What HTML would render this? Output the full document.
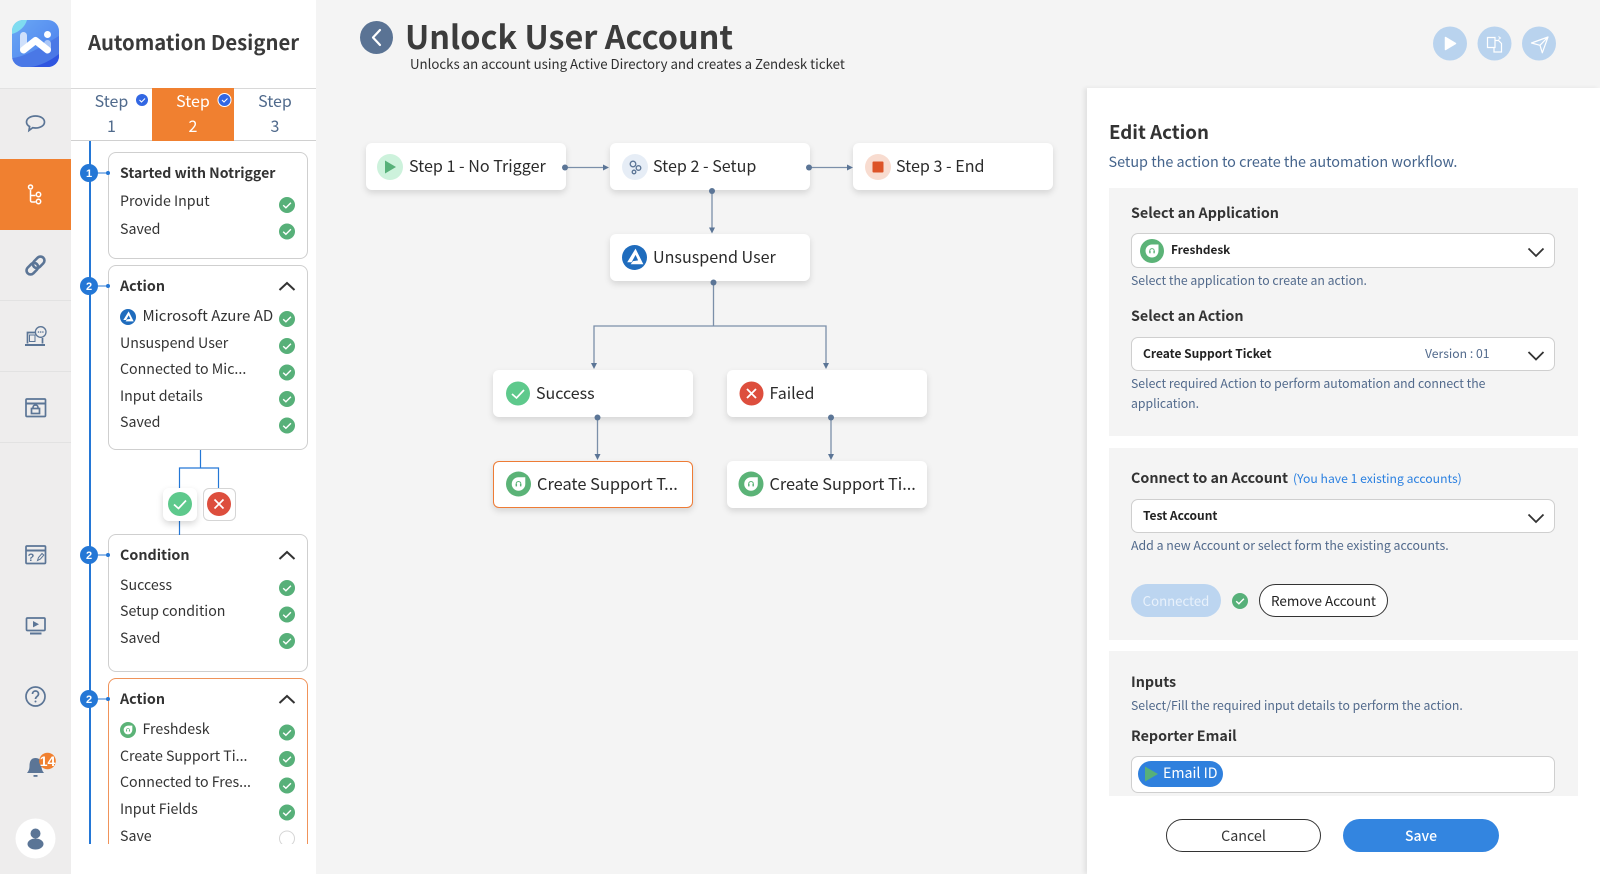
<!DOCTYPE html>
<html><head><meta charset="utf-8"><style>
html,body{margin:0;padding:0}
body{width:1600px;height:874px;overflow:hidden;background:#f4f4f4;position:relative;font-family:"Noto Sans CJK JP","Liberation Sans",sans-serif;color:#2f2f2f}
.a{position:absolute}
.t{position:absolute;white-space:nowrap;line-height:20px;height:20px}
.b{font-weight:700}
.s{font-size:14.200px;color:#333}
.h{font-size:14.300px;font-weight:700;color:#333}
.hint{font-size:12.250px;color:#526a8c}
.lbl{font-size:14.300px;font-weight:700;color:#333}
.sec{position:absolute;left:1109px;width:469px;background:#f4f4f4}
.inp{position:absolute;left:1131px;width:424px;box-sizing:border-box;background:#fff;border:1px solid #cfcfcf;border-radius:7px}
.node{position:absolute;width:200px;height:47px;background:#fff;border-radius:6px;box-shadow:0 3px 7px rgba(0,0,0,.13)}
.node span{position:absolute;left:43px;top:10.500px;line-height:22px;font-size:16.100px;white-space:nowrap;color:#2b2b2b}
.card{position:absolute;left:108px;width:200px;box-sizing:border-box;background:#fff;border:1px solid #cfcfcf;border-radius:8px}
.line{position:absolute;background:#e2e2e2;left:0;width:71px;height:1px}
svg{position:absolute;left:0;top:0;overflow:visible}
</style></head><body>
<svg width="0" height="0"><defs>
<symbol id="ck" viewBox="0 0 16 16" overflow="visible"><circle cx="8" cy="8" r="8" fill="#57b079"/><path d="M4.2 8.2l2.7 2.6 5-5" fill="none" stroke="#fff" stroke-width="1.4"/></symbol>
<symbol id="fd" viewBox="0 0 24 24"><circle cx="12" cy="12" r="12" fill="#5bb377"/><path d="M12 5.500h6.500v6.500a6.500 6.500 0 1 1-6.500-6.500z" fill="#fff"/><path d="M9.800 13v-1.200a2.200 2.200 0 0 1 4.400 0v1.200" fill="none" stroke="#5bb377" stroke-width="1"/><rect x="9.200" y="12" width="1.400" height="2.300" fill="#5bb377"/><rect x="13.400" y="12" width="1.400" height="2.300" fill="#5bb377"/></symbol>
<symbol id="az" viewBox="0 0 24 24"><circle cx="12" cy="12" r="12" fill="#1f6cbd"/><path d="M13 3.500L5 16.500h4.200L13 9.500l2.500 5.300-5 .7L8.300 18.500H20.500z" fill="#fff"/></symbol>
</defs></svg>

<!-- rail -->
<div class="a" style="left:0;top:0;width:71px;height:874px;background:#eeeded"></div>
<div class="a" style="left:0;top:0;width:71px;height:88px;background:#f3f3f3"></div>
<div class="a" style="left:0;top:159px;width:71px;height:71px;background:#f08030"></div>
<div class="line" style="top:88px"></div><div class="line" style="top:300px"></div><div class="line" style="top:371px"></div><div class="line" style="top:442px"></div>
<svg width="71" height="874">
<defs><linearGradient id="lg" x1="0" y1="0" x2="1" y2="1"><stop offset="0" stop-color="#6aa8f5"/><stop offset="1" stop-color="#4a7cec"/></linearGradient>
<clipPath id="lc"><rect x="12" y="20" width="47" height="47" rx="11"/></clipPath></defs>
<g clip-path="url(#lc)"><rect x="12" y="20" width="47" height="47" fill="url(#lg)"/>
<path d="M12 20h15c-2 7-8 12-15 14z" fill="#7fdcf0"/>
<path d="M12 67V58c12-1 24-8 47-22v31z" fill="#4a78e6"/><path d="M30 67c10-1 20-6 29-13v13z" fill="#2f55e0"/></g>
<rect x="20" y="32" width="7" height="20" rx="3.500" fill="#cfe0fb"/><rect x="44" y="40" width="7" height="12" rx="3.500" fill="#a9c6f8"/>
<path d="M23.500 50L35.500 40.500 47.500 50" fill="none" stroke="#fff" stroke-width="7" stroke-linecap="round" stroke-linejoin="round"/><circle cx="47.500" cy="34.500" r="3.500" fill="#fff"/>
<g fill="none" stroke="#5b7596" stroke-width="1.700">
<path d="M35.500 116c5 0 9 2.500 9 6s-4 6-9 6c-1 0-2 0-2.800-.3l-3.700 2.800.6-4c-2-1-3.100-2.700-3.100-4.500 0-3.500 4-6 9-6z"/>
<path d="M25 345h20" stroke-width="2"/><path d="M27.500 343.500V332.500h7.500M42.500 338v5.500"/><rect x="29.500" y="335" width="5.500" height="6.500" stroke-width="1"/><circle cx="40.700" cy="332" r="5.300" stroke-width="1.300"/>
<rect x="26" y="399" width="19.500" height="17.500" rx="1"/><path d="M26 403.500h19.500" stroke-width="2"/><rect x="31.500" y="408.500" width="8" height="5"/><path d="M33 408.500v-1a2.500 2.500 0 0 1 5 0v1"/>
<rect x="26" y="546" width="19.500" height="17.500" rx="1"/><path d="M26 550.500h19.500" stroke-width="2"/>
<rect x="26.500" y="618" width="18.500" height="12.500" rx="1"/><path d="M30 633.500h11.500" stroke-width="2"/>
<circle cx="35.500" cy="696.500" r="9.500"/><path d="M32.500 694c0-4 6-4 6 0 0 2.500-3 2.500-3 5"/>
<path d="M37.500 560.500l1-3 3.500-4 1.800 1.600-3.500 4z" stroke-width="1"/>
</g>
<circle cx="35.500" cy="701.500" r="1" fill="#5b7596"/>
<g fill="#5b7596"><circle cx="38.500" cy="332" r=".8"/><circle cx="40.700" cy="332" r=".8"/><circle cx="42.900" cy="332" r=".8"/></g>
<text x="31" y="561" font-size="11" font-weight="700" fill="#5b7596" text-anchor="middle" font-family="Liberation Sans,sans-serif">?</text>
<g fill="none" stroke="#5b7596" stroke-width="2.600" transform="rotate(-45 35.500 265.500)"><rect x="24.500" y="261.500" width="13" height="8" rx="4"/><rect x="33.500" y="261.500" width="13" height="8" rx="4"/></g>
<g fill="none" stroke="#fff" stroke-width="1.500"><path d="M30.500 190v10.500a1.500 1.500 0 0 0 1.500 1.500h3.500M31 195.500h4.500"/><circle cx="30.500" cy="187" r="2"/><circle cx="38.500" cy="194.500" r="2.200"/><circle cx="38.500" cy="201.500" r="2.200"/></g>
<path d="M33 621l6 3.200-6 3.200z" fill="#5b7596"/>
<path d="M35.500 758c4.500 0 6 3.500 6 8 0 3 .8 5 2.500 7h-17c1.700-2 2.500-4 2.500-7 0-4.500 1.500-8 6-8z" fill="#5b7596"/><rect x="33.500" y="775" width="4" height="1.800" fill="#5b7596"/>
<circle cx="47.500" cy="761" r="8.300" fill="#f08030"/>
<circle cx="35.500" cy="838.500" r="20" fill="#fff"/><circle cx="35.500" cy="833.500" r="5" fill="#5b7596"/><ellipse cx="35.500" cy="844" rx="8" ry="5.500" fill="#5b7596"/>
</svg>
<div class="t b" style="left:38.500px;top:751px;font-size:14px;color:#fff;width:18px;text-align:center;font-family:'Liberation Sans',sans-serif">14</div>

<!-- panel -->
<div class="a" style="left:71px;top:0;width:245px;height:874px;background:#fff"></div>
<div class="t b" style="left:88px;top:31px;font-size:20.300px;line-height:20px;color:#3a3a3a">Automation Designer</div>
<div class="a" style="left:71px;top:88px;width:245px;height:1px;background:#d8d8d8"></div>
<div class="a" style="left:71px;top:140px;width:245px;height:1px;background:#d0d0d0"></div>
<div class="a" style="left:152px;top:88px;width:82px;height:53px;background:#f08030"></div>
<div class="t" style="left:71px;width:81px;text-align:center;top:90px;font-size:16px;color:#506a8c">Step</div>
<div class="t" style="left:71px;width:81px;text-align:center;top:115px;font-size:16px;color:#506a8c">1</div>
<div class="t" style="left:152px;width:82px;text-align:center;top:90px;font-size:16px;color:#fff">Step</div>
<div class="t" style="left:152px;width:82px;text-align:center;top:115px;font-size:16px;color:#fff">2</div>
<div class="t" style="left:234px;width:82px;text-align:center;top:90px;font-size:16px;color:#506a8c">Step</div>
<div class="t" style="left:234px;width:82px;text-align:center;top:115px;font-size:16px;color:#506a8c">3</div>
<svg width="320" height="160"><circle cx="142" cy="100" r="6" fill="#3267e3"/><circle cx="224.500" cy="100" r="6.500" fill="#3267e3" stroke="#fff" stroke-width="1"/><path d="M139.500 100l2 2 3.500-3.500M222 100l2 2 3.500-3.500" fill="none" stroke="#fff" stroke-width="1"/></svg>

<div class="a" style="left:71px;top:141px;width:240px;height:703px;overflow:hidden" id="clip">
<div style="position:absolute;left:-71px;top:-141px;width:320px;height:874px">
<div class="a" style="left:89px;top:141px;width:1.500px;height:703px;background:#2477d6"></div>
<div class="card" style="top:152px;height:107px"></div>
<div class="card" style="top:265px;height:185px"></div>
<div class="card" style="top:534px;height:138px"></div>
<div class="card" style="top:678px;height:220px;border-color:#f0935a"></div>

<div class="t h" style="left:120px;top:163px;font-size:14.100px">Started with Notrigger</div>
<div class="t s" style="left:120px;top:191px">Provide Input</div>
<div class="t s" style="left:120px;top:218.500px">Saved</div>
<div class="t h" style="left:120px;top:276px">Action</div>
<div class="t" style="left:142.500px;top:306px;font-size:15px;color:#333">Microsoft Azure AD</div>
<div class="t s" style="left:120px;top:332.500px">Unsuspend User</div>
<div class="t s" style="left:120px;top:359px">Connected to Mic...</div>
<div class="t s" style="left:120px;top:385.500px">Input details</div>
<div class="t s" style="left:120px;top:412px">Saved</div>
<div class="t h" style="left:120px;top:544.500px">Condition</div>
<div class="t s" style="left:120px;top:574.500px">Success</div>
<div class="t s" style="left:120px;top:601px">Setup condition</div>
<div class="t s" style="left:120px;top:628px">Saved</div>
<div class="t h" style="left:120px;top:689px">Action</div>
<div class="t" style="left:142.500px;top:719px;font-size:14.200px;color:#333">Freshdesk</div>
<div class="t s" style="left:120px;top:745.500px">Create Support Ti...</div>
<div class="t s" style="left:120px;top:772px">Connected to Fres...</div>
<div class="t s" style="left:120px;top:799px">Input Fields</div>
<div class="t s" style="left:120px;top:825.500px">Save</div>

<svg width="320" height="874">
<g fill="#2477d6">
<circle cx="89" cy="173" r="9"/><circle cx="89" cy="286" r="9"/><circle cx="89" cy="555" r="9"/><circle cx="89" cy="699" r="9"/>
<circle cx="108" cy="173" r="2"/><circle cx="108" cy="286" r="2"/><circle cx="108" cy="555" r="2"/><circle cx="108" cy="699" r="2"/>
<rect x="97" y="172.500" width="10" height="1"/><rect x="97" y="285.500" width="10" height="1"/><rect x="97" y="554.500" width="10" height="1"/><rect x="97" y="698.500" width="10" height="1"/>
</g>
<g font-size="11" font-weight="700" fill="#fff" text-anchor="middle" font-family="Liberation Sans, sans-serif"><text x="89" y="177">1</text><text x="89" y="290">2</text><text x="89" y="559">2</text><text x="89" y="703">2</text></g>
<g fill="none" stroke="#333" stroke-width="2"><path d="M279.500 290l7.500-7 7.500 7M279.500 559l7.500-7 7.500 7M279.500 703l7.500-7 7.500 7"/></g>
<use href="#ck" x="279" y="197" width="16" height="16"/><use href="#ck" x="279" y="223.500" width="16" height="16"/>
<use href="#ck" x="279" y="311" width="16" height="16"/><use href="#ck" x="279" y="338" width="16" height="16"/><use href="#ck" x="279" y="364.500" width="16" height="16"/><use href="#ck" x="279" y="391" width="16" height="16"/><use href="#ck" x="279" y="417.500" width="16" height="16"/>
<use href="#ck" x="279" y="580" width="16" height="16"/><use href="#ck" x="279" y="606.500" width="16" height="16"/><use href="#ck" x="279" y="633" width="16" height="16"/>
<use href="#ck" x="279" y="724.500" width="16" height="16"/><use href="#ck" x="279" y="751" width="16" height="16"/><use href="#ck" x="279" y="777.500" width="16" height="16"/><use href="#ck" x="279" y="804.500" width="16" height="16"/>
<circle cx="287" cy="838.500" r="7.500" fill="#fff" stroke="#d5d5d5"/>
<use href="#az" x="120" y="309" width="16" height="16"/><use href="#fd" x="120" y="722" width="16" height="16"/>
<path d="M200.500 450v18M179.500 488v-20h39v20M179.500 521v14" fill="none" stroke="#2477d6" stroke-width="1.200"/>
</svg>
<div class="a" style="left:163px;top:488px;width:34px;height:33px;background:#fff;border-radius:6px;box-shadow:0 3px 7px rgba(0,0,0,.16)"></div>
<div class="a" style="left:203px;top:488px;width:33px;height:33px;box-sizing:border-box;background:#fff;border:1px solid #d5d5d5;border-radius:6px"></div>
<svg width="320" height="874"><circle cx="180" cy="504" r="12" fill="#5ec98c"/><path d="M174 504.500l4.500 4 7.500-8" fill="none" stroke="#fff" stroke-width="1.700"/><circle cx="219" cy="504" r="12" fill="#dd4e3d"/><path d="M214.500 499.500l9 9m0-9l-9 9" stroke="#fff" stroke-width="1.700"/></svg>
</div></div>

<!-- header -->
<svg width="1600" height="874">
<circle cx="376.500" cy="37.500" r="16.500" fill="#5a7394"/><path d="M380 30l-7 7.500 7 7.500" fill="none" stroke="#fff" stroke-width="2.200" stroke-linecap="round" stroke-linejoin="round"/>
<circle cx="1450" cy="43.500" r="17" fill="#b9d3ee"/><circle cx="1494.500" cy="43.500" r="17" fill="#b9d3ee"/><circle cx="1539" cy="43.500" r="17" fill="#b9d3ee"/>
<path d="M1445.500 37.500l10 6-10 6z" fill="#fff" stroke="#fff" stroke-width="1.500" stroke-linejoin="round"/>
<g fill="none" stroke="#fff" stroke-width="1.200"><path d="M1487.500 37.500h7.500v10h-7.500z" /><path d="M1495 40.500h3.500l3 3v8.500h-7.500v-4.500"/><path d="M1498.500 36.500l2 1.500-2 1.500" stroke-width="1"/></g>
<path d="M1548 37l-16.500 6 8.500 2.300 2.300 7.500zM1548 37l-8 8.300" fill="none" stroke="#fff" stroke-width="1.200" stroke-linejoin="round"/>
</svg>
<div class="t" style="left:405px;top:26px;font-size:32.400px;font-weight:700;color:#3c3c3c">Unlock User Account</div>
<div class="t" style="left:410px;top:54px;font-size:13.250px;color:#2f2f2f">Unlocks an account using Active Directory and creates a Zendesk ticket</div>

<!-- flow -->
<div class="node" style="left:366px;top:143px"><span>Step 1 - No Trigger</span></div>
<div class="node" style="left:610px;top:143px"><span>Step 2 - Setup</span></div>
<div class="node" style="left:853px;top:143px"><span>Step 3 - End</span></div>
<div class="node" style="left:610px;top:234px"><span>Unsuspend User</span></div>
<div class="node" style="left:493px;top:370px"><span style="top:11px;font-size:16px">Success</span></div>
<div class="node" style="left:727px;top:370px"><span style="left:42.500px;top:11px;font-size:16px">Failed</span></div>
<div class="node" style="left:493px;top:461px;box-sizing:border-box;border:1px solid #ee7c36"><span style="left:43px;top:9.500px;font-size:16.400px">Create Support T...</span></div>
<div class="node" style="left:727px;top:461px"><span style="left:42.500px;top:10.500px;font-size:16.300px">Create Support Ti...</span></div>
<svg width="1600" height="874"><g fill="none" stroke="#7b8fa9" stroke-width="1.300">
<path d="M565 167.500h40M809 167.500h40M712 191v38M713.500 282v44M594 364v-38h232v38M597.500 417v38M831 417v38"/></g>
<g fill="#5b7596"><circle cx="565" cy="167.500" r="3"/><circle cx="809" cy="167.500" r="3"/><circle cx="712" cy="191" r="3"/><circle cx="713.500" cy="282.500" r="3"/><circle cx="597.500" cy="417.500" r="3"/><circle cx="831" cy="417.500" r="3"/>
<path d="M603 164.500l6 3-6 3zM847 164.500l6 3-6 3zM709 227.500l3 6 3-6zM591 363l3 6 3-6zM823 363l3 6 3-6zM594.500 454l3 6 3-6zM828 454l3 6 3-6z"/></g>
<circle cx="390" cy="167" r="13" fill="#cdf2dc"/><path d="M385 160.500l11 6.500-11 6.500z" fill="#57b079"/>
<circle cx="635" cy="167" r="13" fill="#e6edf6"/><g fill="none" stroke="#5b7596" stroke-width="1.300"><circle cx="633" cy="164" r="2.800"/><circle cx="638.500" cy="168" r="2.300"/><circle cx="634" cy="172" r="1.800"/></g>
<circle cx="878" cy="167" r="13" fill="#f8dcd0"/><rect x="872.500" y="161.500" width="11" height="11" rx="1" fill="#dd5428"/>
<use href="#az" x="622" y="245" width="25" height="25"/>
<circle cx="518" cy="393.500" r="12" fill="#5ec98c"/><path d="M512 394l4.500 4 7.500-8" fill="none" stroke="#fff" stroke-width="1.700"/>
<circle cx="751.500" cy="393.500" r="12" fill="#dd4e3d"/><path d="M747 389l9 9m0-9l-9 9" stroke="#fff" stroke-width="1.800"/>
<use href="#fd" x="506" y="471.500" width="25" height="25"/><use href="#fd" x="738.500" y="471.500" width="25" height="25"/>
</svg>

<!-- right panel -->
<div class="a" style="left:1087px;top:88px;width:513px;height:786px;background:#fff;box-shadow:-3px 0 4px rgba(0,0,0,.07)"></div>
<div class="t" style="left:1109px;top:122px;font-size:18.700px;font-weight:700;color:#333">Edit Action</div>
<div class="t" style="left:1108.500px;top:151.500px;font-size:14.400px;color:#45648c">Setup the action to create the automation workflow.</div>
<div class="sec" style="top:188px;height:248px"></div>
<div class="sec" style="top:448px;height:192px"></div>
<div class="sec" style="top:651px;height:145px"></div>

<div class="t lbl" style="left:1131px;top:202.500px">Select an Application</div>
<div class="inp" style="top:233px;height:35px"></div>
<div class="t b" style="left:1171px;top:240px;font-size:11.800px;color:#222">Freshdesk</div>
<div class="t hint" style="left:1131px;top:269.500px">Select the application to create an action.</div>
<div class="t lbl" style="left:1131px;top:306px">Select an Action</div>
<div class="inp" style="top:337px;height:34px"></div>
<div class="t b" style="left:1143px;top:343.500px;font-size:12px;color:#222">Create Support Ticket</div>
<div class="t" style="left:1425px;top:343px;font-size:12.200px;color:#526a8c">Version : 01</div>
<div class="t hint" style="left:1131px;top:373px">Select required Action to perform automation and connect the</div>
<div class="t hint" style="left:1131px;top:393px">application.</div>

<div class="t lbl" style="left:1131px;top:468px">Connect to an Account</div>
<div class="t" style="left:1293px;top:468px;font-size:12.200px;color:#2b80e0">(You have 1 existing accounts)</div>
<div class="inp" style="top:499px;height:34px"></div>
<div class="t b" style="left:1143px;top:505.500px;font-size:12px;color:#222">Test Account</div>
<div class="t hint" style="left:1131px;top:535px;font-size:12.350px">Add a new Account or select form the existing accounts.</div>
<div class="a" style="left:1131px;top:584px;width:90px;height:33px;border-radius:17px;background:#bcd5f0;color:#e8f1fb;font-size:13.200px;line-height:33px;text-align:center">Connected</div>
<div class="a" style="left:1259px;top:584px;width:129px;height:33px;box-sizing:border-box;border-radius:17px;border:1px solid #333;background:#fff;font-size:13.500px;line-height:30px;text-align:center;color:#222">Remove Account</div>

<div class="t lbl" style="left:1131px;top:671.500px">Inputs</div>
<div class="t hint" style="left:1131px;top:695px">Select/Fill the required input details to perform the action.</div>
<div class="t lbl" style="left:1131px;top:725.500px">Reporter Email</div>
<div class="inp" style="top:756px;height:37px"></div>
<div class="a" style="left:1138px;top:761px;width:85px;height:26px;border-radius:13px;background:#2f80dd;color:#fff;font-size:14.200px;line-height:24px;padding-left:25px;box-sizing:border-box">Email ID</div>

<div class="a" style="left:1166px;top:819px;width:155px;height:33px;box-sizing:border-box;border:1px solid #333;border-radius:17px;background:#fff;font-size:14.300px;line-height:31px;text-align:center;color:#333">Cancel</div>
<div class="a" style="left:1343px;top:819px;width:156px;height:33px;border-radius:17px;background:#3385e0;color:#fff;font-size:14px;line-height:34px;text-align:center;font-weight:500">Save</div>

<svg width="1600" height="874">
<use href="#fd" x="1140" y="239" width="24" height="24"/>
<g fill="none" stroke="#333" stroke-width="1.800"><path d="M1528.500 248.500l7.500 7.500 7.500-7.500M1528.500 352l7.500 7.500 7.500-7.500M1528.500 514.500l7.500 7.500 7.500-7.500"/></g>
<use href="#ck" x="1232" y="593" width="16" height="16"/>
<path d="M1145 766.500l13 7.500-13 7.500z" fill="#57b079"/>
</svg>
</body></html>
